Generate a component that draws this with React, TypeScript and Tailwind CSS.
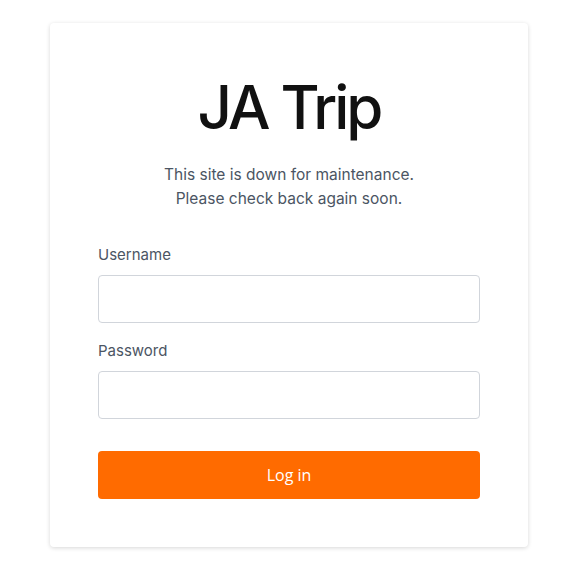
export default function App() {
  return (
    <div className="min-h-[570px] bg-white pt-[23px] font-['Inter',sans-serif]">
      <div className="mx-auto w-[478px] rounded-[4px] bg-white px-12 pb-12 pt-[54px] shadow-[0_1px_4px_rgba(0,0,0,0.16)]">
        <h1 className="text-center text-[60px] font-medium leading-none tracking-[-0.05em] text-[#111111]">
          JA Trip
        </h1>
        <p className="mt-[26px] text-center text-[15.5px] leading-[24px] text-[#4b5563]">
          This site is down for maintenance.
          <br />
          Please check back again soon.
        </p>
        <form className="mt-[32px] flex flex-col">
          <label className="text-[15px] leading-[24px] text-[#4b5563]">Username</label>
          <input
            type="text"
            className="mt-[8px] h-[48px] w-full rounded-[4px] border border-[#d1d5db] bg-white px-3 outline-none"
          />
          <label className="mt-[16px] text-[15px] leading-[24px] text-[#4b5563]">Password</label>
          <input
            type="password"
            className="mt-[8px] h-[48px] w-full rounded-[4px] border border-[#d1d5db] bg-white px-3 outline-none"
          />
          <button
            type="button"
            className="mt-[32px] h-[48px] w-full rounded-[4px] bg-[#ff6b00] font-['Open_Sans',sans-serif] text-[16px] text-white"
          >
            Log in
          </button>
        </form>
      </div>
    </div>
  );
}
